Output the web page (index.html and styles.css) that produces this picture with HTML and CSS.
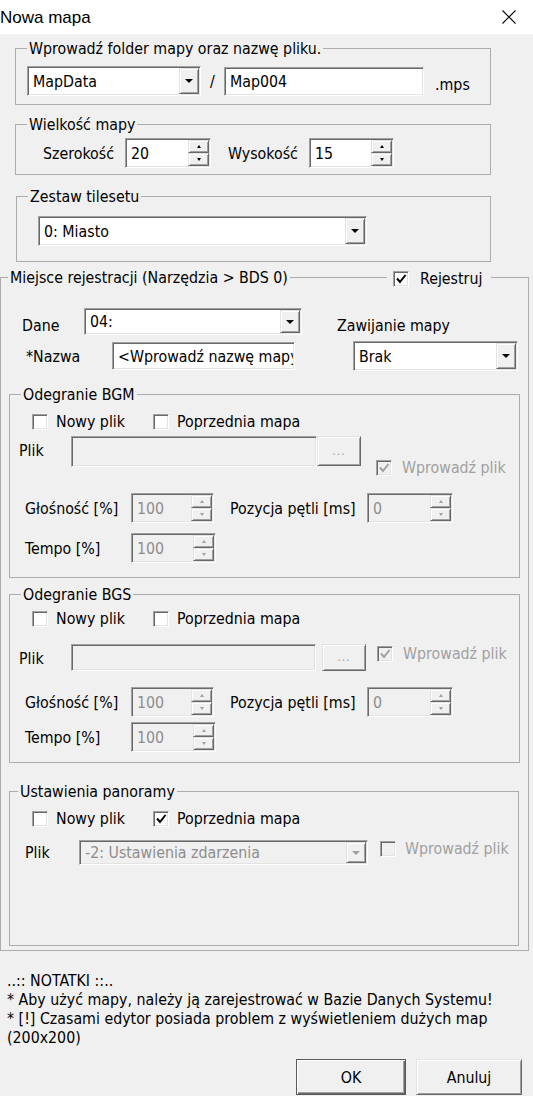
FILE: index.html
```html
<!DOCTYPE html>
<html lang="pl">
 <head>
  <meta charset="UTF-8" />
  <meta name="viewport" content="width=device-width, initial-scale=1.0" />
  <title>Nowa mapa</title>
  <link rel="stylesheet" href="styles.css">
 </head>
 <body>
  <!-- pasek tytułu -->
  <div class="titlebar">
   <span class="title">Nowa mapa</span>
   <svg class="close" width="14" height="14" viewBox="0 0 14 14">
    <path d="M0.5 0.5L13.5 13.5M13.5 0.5L0.5 13.5" stroke="#000" stroke-width="1.1" fill="none" />
   </svg>
  </div>

  <div class="dialog">
   <!-- folder + nazwa pliku -->
   <fieldset class="group g-file">
    <legend>Wprowadź folder mapy oraz nazwę pliku.</legend>
    <div class="row">
     <div class="field combo w-folder"><span class="val">MapData</span><span class="drop"><i class="arrow"></i></span></div>
     <span class="slash">/</span>
     <div class="field w-name"><span class="val">Map004</span></div>
     <span class="ext">.mps</span>
    </div>
   </fieldset>

   <!-- wielkość -->
   <fieldset class="group g-size">
    <legend>Wielkość mapy</legend>
    <div class="row">
     <span class="lbl l-width">Szerokość</span>
     <div class="field spin w-86">
      <span class="val">20</span>
      <span class="spin-btns"><span class="sb"><i class="up"></i></span><span class="sb"><i class="down"></i></span></span>
     </div>
     <span class="lbl l-height">Wysokość</span>
     <div class="field spin w-85">
      <span class="val">15</span>
      <span class="spin-btns"><span class="sb"><i class="up"></i></span><span class="sb"><i class="down"></i></span></span>
     </div>
    </div>
   </fieldset>

   <!-- tileset -->
   <fieldset class="group g-tiles">
    <legend>Zestaw tilesetu</legend>
    <div class="row">
     <div class="field combo w-tiles"><span class="val">0: Miasto</span><span class="drop"><i class="arrow"></i></span></div>
    </div>
   </fieldset>

   <!-- rejestracja -->
   <div class="reg-wrap">
    <fieldset class="group g-reg">
     <legend>Miejsce rejestracji (Narzędzia &gt; BDS 0)</legend>

     <div class="row row-data">
      <span class="lbl l-dane">Dane</span>
      <div class="field combo w-dane"><span class="val">04:</span><span class="drop"><i class="arrow"></i></span></div>
      <span class="lbl l-wrap">Zawijanie mapy</span>
     </div>
     <div class="row row-name">
      <span class="lbl l-nazwa">*Nazwa</span>
      <div class="field w-nazwa"><span class="val">&lt;Wprowadź nazwę mapy&gt;</span></div>
      <div class="field combo w-brak"><span class="val">Brak</span><span class="drop"><i class="arrow"></i></span></div>
     </div>

     <!-- BGM -->
     <fieldset class="group sub g-bgm">
      <legend>Odegranie BGM</legend>
      <div class="row checks">
       <label class="chk first"><span class="box"></span>Nowy plik</label>
       <label class="chk"><span class="box"></span>Poprzednia mapa</label>
      </div>
      <div class="row row-file">
       <span class="lbl l-plik">Plik</span>
       <div class="field off w-path"></div>
       <span class="btn off dots">...</span>
       <label class="chk off enter"><span class="box on"><svg width="14" height="14" viewBox="0 0 14 14"><path d="M3 6.5L6 10L11.5 3" stroke="#a0a0a0" stroke-width="2" fill="none" /></svg></span>Wprowadź plik</label>
      </div>
      <div class="row row-vol">
       <span class="lbl l-vol">Głośność [%]</span>
       <div class="field off spin w-83">
        <span class="val">100</span>
        <span class="spin-btns"><span class="sb"><i class="up"></i></span><span class="sb"><i class="down"></i></span></span>
       </div>
       <span class="lbl l-loop">Pozycja pętli [ms]</span>
       <div class="field off spin w-86">
        <span class="val">0</span>
        <span class="spin-btns"><span class="sb"><i class="up"></i></span><span class="sb"><i class="down"></i></span></span>
       </div>
      </div>
      <div class="row row-tempo">
       <span class="lbl l-vol">Tempo [%]</span>
       <div class="field off spin w-85">
        <span class="val">100</span>
        <span class="spin-btns"><span class="sb"><i class="up"></i></span><span class="sb"><i class="down"></i></span></span>
       </div>
      </div>
     </fieldset>

     <!-- BGS -->
     <fieldset class="group sub g-bgs">
      <legend>Odegranie BGS</legend>
      <div class="row checks">
       <label class="chk first"><span class="box"></span>Nowy plik</label>
       <label class="chk"><span class="box"></span>Poprzednia mapa</label>
      </div>
      <div class="row row-file">
       <span class="lbl l-plik">Plik</span>
       <div class="field off w-path2"></div>
       <span class="btn off dots">...</span>
       <label class="chk off enter"><span class="box on"><svg width="14" height="14" viewBox="0 0 14 14"><path d="M3 6.5L6 10L11.5 3" stroke="#a0a0a0" stroke-width="2" fill="none" /></svg></span>Wprowadź plik</label>
      </div>
      <div class="row row-vol">
       <span class="lbl l-vol">Głośność [%]</span>
       <div class="field off spin w-83">
        <span class="val">100</span>
        <span class="spin-btns"><span class="sb"><i class="up"></i></span><span class="sb"><i class="down"></i></span></span>
       </div>
       <span class="lbl l-loop">Pozycja pętli [ms]</span>
       <div class="field off spin w-86">
        <span class="val">0</span>
        <span class="spin-btns"><span class="sb"><i class="up"></i></span><span class="sb"><i class="down"></i></span></span>
       </div>
      </div>
      <div class="row row-tempo">
       <span class="lbl l-vol">Tempo [%]</span>
       <div class="field off spin w-85">
        <span class="val">100</span>
        <span class="spin-btns"><span class="sb"><i class="up"></i></span><span class="sb"><i class="down"></i></span></span>
       </div>
      </div>
     </fieldset>

     <!-- panorama -->
     <fieldset class="group sub g-pan">
      <legend>Ustawienia panoramy</legend>
      <div class="row checks">
       <label class="chk first"><span class="box"></span>Nowy plik</label>
       <label class="chk"><span class="box"><svg width="14" height="14" viewBox="0 0 14 14"><path d="M3 6.5L6 10L11.5 3" stroke="#000" stroke-width="2" fill="none" /></svg></span>Poprzednia mapa</label>
      </div>
      <div class="row row-file">
       <span class="lbl l-plik2">Plik</span>
       <div class="field off combo w-pan"><span class="val">-2: Ustawienia zdarzenia</span><span class="drop"><i class="arrow"></i></span></div>
       <label class="chk off enter2"><span class="box"></span>Wprowadź plik</label>
      </div>
     </fieldset>
    </fieldset>

    <!-- checkbox na ramce grupy -->
    <label class="chk reg-check"><span class="box"><svg width="14" height="14" viewBox="0 0 14 14"><path d="M3 6.5L6 10L11.5 3" stroke="#000" stroke-width="2" fill="none" /></svg></span>Rejestruj</label>
   </div>

   <!-- notatki -->
   <div class="notes">
    <p>..:: NOTATKI ::..</p>
    <p>* Aby użyć mapy, należy ją zarejestrować w Bazie Danych Systemu!</p>
    <p>* [!] Czasami edytor posiada problem z wyświetleniem dużych map (200x200)</p>
   </div>

   <div class="actions">
    <span class="btn push default">OK</span>
    <span class="btn push">Anuluj</span>
   </div>
  </div>
 </body>
</html>
```

FILE: styles.css
```css
* {
 margin: 0;
 padding: 0;
 box-sizing: border-box;
}
body {
 width: 533px;
 background-color: #f0f0f0;
 color: #000;
 font-family: "DejaVu Sans Condensed", "DejaVu Sans", sans-serif;
 font-stretch: condensed;
 font-size: 15.8px;
 line-height: 19px;
 overflow: hidden;
}
.titlebar {
 height: 34px;
 background-color: #fff;
 display: flex;
 align-items: center;
 justify-content: space-between;
 padding-right: 17px;
}
.title {
 font-family: "Liberation Sans", Arial, sans-serif;
 font-stretch: normal;
 font-size: 17px;
}

/* group box */
.group {
 border: 1px solid #adadad;
 padding: 0 11px;
 min-width: 0;
}
.group legend {
 padding: 0 2px;
 line-height: 19px;
}
.row {
 display: flex;
 align-items: center;
}
.lbl {
 flex: none;
 white-space: nowrap;
}

/* 3d edges */
.field {
 display: flex;
 align-items: stretch;
 flex: none;
 padding: 1px;
 background-color: #fff;
 border: 1px solid;
 border-color: #a0a0a0 #fff #fff #a0a0a0;
 box-shadow: inset 1px 1px #696969, inset -1px -1px #e3e3e3;
}
.field .val {
 flex: 1;
 display: flex;
 align-items: center;
 padding-left: 4px;
 white-space: nowrap;
 overflow: hidden;
}
.field.off {
 background-color: #f0f0f0;
 color: #8d8d8d;
}
.drop,
.sb,
.btn {
 background-color: #f0f0f0;
 border: 1px solid;
 border-color: #e3e3e3 #696969 #696969 #e3e3e3;
 box-shadow: inset 1px 1px #fff, inset -1px -1px #a0a0a0;
}
.drop {
 width: 20px;
 flex: none;
 display: flex;
 align-items: center;
 justify-content: center;
}
.arrow {
 width: 0;
 height: 0;
 border-left: 4px solid transparent;
 border-right: 4px solid transparent;
 border-top: 4px solid #000;
}
.off .arrow {
 border-top-color: #a0a0a0;
}
.spin-btns {
 width: 21px;
 flex: none;
 display: flex;
 flex-direction: column;
}
.sb {
 flex: 1;
 display: flex;
 align-items: center;
 justify-content: center;
}
.up,
.down {
 width: 0;
 height: 0;
 border-left: 2px solid transparent;
 border-right: 2px solid transparent;
}
.up {
 border-bottom: 3px solid #000;
}
.down {
 border-top: 3px solid #000;
}
.off .up {
 border-bottom-color: #a0a0a0;
}
.off .down {
 border-top-color: #a0a0a0;
}

/* checkbox */
.chk {
 display: flex;
 align-items: center;
 gap: 8px;
 white-space: nowrap;
}
.box {
 width: 16px;
 height: 16px;
 flex: none;
 display: flex;
 align-items: center;
 justify-content: center;
 background-color: #fff;
 border: 1px solid;
 border-color: #a0a0a0 #fff #fff #a0a0a0;
 box-shadow: inset 1px 1px #696969, inset -1px -1px #e3e3e3;
}
.chk.off {
 color: #a0a0a0;
}
.chk.off .box {
 background-color: #f0f0f0;
}

/* pierwsza grupa */
.g-file {
 width: 476px;
 margin: 5px 0 0 15px;
 padding-top: 8px;
 padding-bottom: 8px;
}
.w-folder {
 width: 174px;
 height: 30px;
}
.slash {
 width: 23px;
 text-align: center;
}
.w-name {
 width: 200px;
 height: 29px;
}
.ext {
 margin: 6px 0 0 11px;
}

.g-size {
 width: 476px;
 margin: 10px 0 0 15px;
 padding-top: 4px;
 padding-bottom: 6px;
}
.l-width {
 width: 82px;
 margin-left: 16px;
}
.l-height {
 width: 81px;
 margin-left: 17px;
}
.w-86 {
 width: 86px;
 height: 30px;
}
.w-85 {
 width: 85px;
 height: 30px;
}
.w-83 {
 width: 83px;
 height: 30px;
}

.g-tiles {
 width: 475px;
 margin: 12px 0 0 16px;
 padding-top: 10px;
 padding-bottom: 15px;
}
.w-tiles {
 width: 329px;
 height: 30px;
 margin-left: 10px;
}

/* rejestracja */
.reg-wrap {
 position: relative;
 margin-top: 6px;
}
.g-reg {
 width: 529px;
 padding: 0 7px 4px;
}
.reg-check {
 position: absolute;
 top: 1px;
 left: 387px;
 padding: 0 9px 0 6px;
 gap: 11px;
 background-color: #f0f0f0;
}
.row-data {
 margin-top: 21px;
 align-items: flex-end;
}
.l-dane {
 width: 62px;
 margin-left: 14px;
}
.w-dane {
 width: 218px;
 height: 27px;
}
.l-wrap {
 margin-left: 35px;
}
.row-name {
 margin-top: 6px;
}
.l-nazwa {
 width: 86px;
 margin-left: 18px;
}
.w-nazwa {
 width: 183px;
 height: 28px;
}
.w-brak {
 width: 165px;
 height: 30px;
 margin-left: 58px;
}

/* grupy dźwięku */
.sub {
 width: 511px;
 padding: 0 8px;
}
.sub legend {
 margin-left: 3px;
}
.g-bgm {
 margin: 14px 0 0 1px;
 padding-bottom: 14px;
}
.g-bgs {
 margin: 7px 0 0 1px;
 padding-bottom: 10px;
}
.g-pan {
 width: 510px;
 margin: 19px 0 0 1px;
 padding-bottom: 80px;
}
.g-pan legend {
 margin-left: 0;
}
.checks {
 height: 19px;
 margin-top: 8px;
}
.g-bgs .checks {
 margin-top: 5px;
}
.chk.first {
 width: 121px;
 margin-left: 14px;
}
.row-file {
 align-items: flex-start;
 margin-top: 5px;
}
.g-bgs .row-file {
 margin-top: 16px;
}
.g-pan .row-file {
 margin-top: 12px;
}
.l-plik {
 width: 52px;
 margin: 5px 0 0 1px;
}
.l-plik2 {
 width: 54px;
 margin: 3px 0 0 7px;
}
.w-path {
 width: 246px;
 height: 31px;
}
.w-path2 {
 width: 245px;
 height: 27px;
}
.dots {
 width: 44px;
 height: 30px;
 flex: none;
 display: flex;
 align-items: center;
 justify-content: center;
 color: #a0a0a0;
 font-size: 12px;
 letter-spacing: 1px;
}
.g-bgs .dots {
 height: 27px;
 margin-left: 6px;
}
.enter {
 margin: 22px 0 0 15px;
 gap: 10px;
}
.g-bgs .enter {
 margin: 0 0 0 11px;
}
.w-pan {
 width: 289px;
 height: 25px;
}
.enter2 {
 margin: -1px 0 0 12px;
 gap: 9px;
}
.row-vol {
 margin-top: 16px;
}
.g-bgs .row-vol {
 margin-top: 16px;
}
.l-vol {
 width: 106px;
 margin-left: 7px;
}
.l-loop {
 width: 137px;
 margin-left: 16px;
}
.row-tempo {
 margin-top: 10px;
}
.g-bgs .row-tempo {
 margin-top: 5px;
}

/* notatki */
.notes {
 margin-top: 20px;
 padding-left: 7px;
}
.actions {
 display: flex;
 justify-content: flex-end;
 gap: 10px;
 margin-top: 12px;
 padding-right: 11px;
}
.push {
 width: 106px;
 height: 36px;
 display: flex;
 align-items: center;
 justify-content: center;
}
.push.default {
 width: 110px;
 border-color: #5a5a5a;
 box-shadow: inset 1px 1px #fff, inset -1px -1px #696969, inset -2px -2px #a0a0a0;
}
```
